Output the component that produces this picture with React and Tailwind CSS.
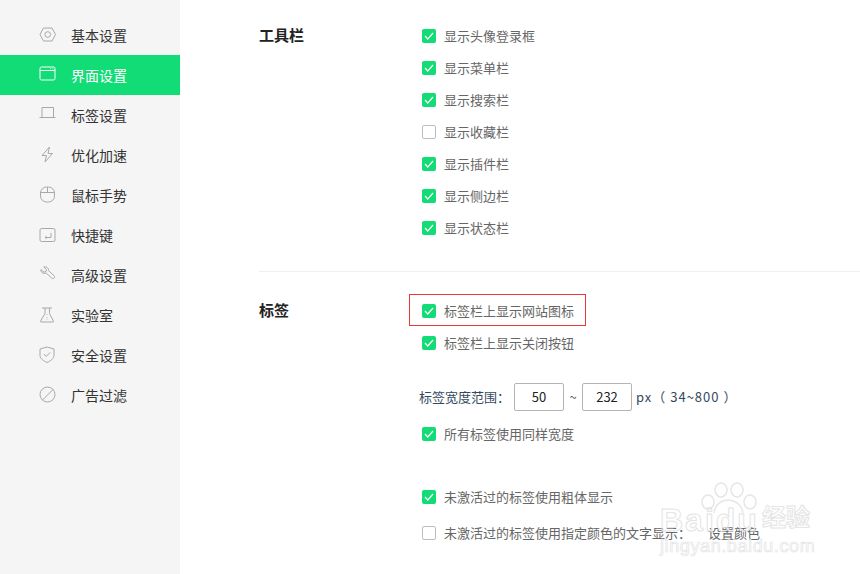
import React from 'react';

const font = { fontFamily: '"Noto Sans CJK SC", sans-serif' };

function NavIcon({ name, active }) {
  const cls = active ? 'text-white' : 'text-[#a8a8a8]';
  const paths = {
    basic: <><path d="M4.5 1h8.500l3.500 6.500-3.500 6.500H4.500L1 7.500z" transform="translate(0 1)" /><circle cx="8.750" cy="8.500" r="2.800" /></>,
    ui: <><rect x="1" y="1" width="15" height="13" rx="1.500" /><path d="M1 4.500h15M11 2.800h.8M13.500 2.800h.8" /></>,
    tab: <><path d="M3 1.500h11.500v10H3zM.5 11.500h16" /></>,
    speed: <path d="M10.500 1 3 9.500h4.500l-1.500 6.500 7.500-8.500H9z" />,
    mouse: <><rect x="1.500" y="1" width="14" height="15" rx="6" /><path d="M1.500 6.500h14M8.500 1v5.500" /></>,
    key: <><rect x="1" y="2.500" width="15" height="13" rx="1.500" /><path d="M12 7v4.500H6M6 11.500l1.500-1.200M6 11.500l1.500 1.200" /></>,
    advanced: <path d="M2 3.500 5 6.200l2-.7.500-2L4.800 1c3-.8 5 1.200 4.700 3.600l5.500 5c1.800 1.800-.6 3.900-2.300 2.400L7.300 7.200C4.500 8 1.200 6.300 2 3.500z" />,
    lab: <g transform="translate(0 1)"><path d="M3 1h10M6 1v5.500L1.500 14.200c-.2.500 0 .8.500.8h12c.5 0 .8-.3.500-.8L10.500 6.500V1" /><path d="M8 7v.8M8 10v.8M8 12.500v.5" /></g>,
    safe: <><path d="M8 1 15 3v6.500c0 3-3.500 5.500-7 7-3.500-1.500-7-4-7-7V3z" /><path d="m4.800 8 2.400 2.400 4-4" /></>,
    ad: <><circle cx="8.500" cy="8.500" r="7.500" /><path d="M3.500 14 14 3.500" /></>,
  };
  return (
    <svg className={`w-[17px] h-[17px] ${cls}`} viewBox="0 0 17 17" fill="none" stroke="currentColor" strokeWidth="1">
      {paths[name]}
    </svg>
  );
}

const navItems = [
  { id: 'basic', label: '基本设置' },
  { id: 'ui', label: '界面设置' },
  { id: 'tab', label: '标签设置' },
  { id: 'speed', label: '优化加速' },
  { id: 'mouse', label: '鼠标手势' },
  { id: 'key', label: '快捷键' },
  { id: 'advanced', label: '高级设置' },
  { id: 'lab', label: '实验室' },
  { id: 'safe', label: '安全设置' },
  { id: 'ad', label: '广告过滤' },
];

function Check({ checked, label, className = '' }) {
  return (
    <div className={`flex items-center h-8 ${className}`}>
      {checked ? (
        <span className="w-[14px] h-[14px] rounded-[2px] bg-[#12dc76] flex items-center justify-center">
          <svg className="w-[10px] h-[10px]" viewBox="0 0 10 10" fill="none" stroke="white" strokeWidth="1.200">
            <path d="m1 5 2.800 3L9 2" />
          </svg>
        </span>
      ) : (
        <span className="w-[14px] h-[14px] rounded-[2px] bg-white border border-[#bdbdbd]"></span>
      )}
      <span className="ml-2 -mt-px text-[13px] text-[#666]">{label}</span>
    </div>
  );
}

const toolbarItems = [
  { label: '显示头像登录框', checked: true },
  { label: '显示菜单栏', checked: true },
  { label: '显示搜索栏', checked: true },
  { label: '显示收藏栏', checked: false },
  { label: '显示插件栏', checked: true },
  { label: '显示侧边栏', checked: true },
  { label: '显示状态栏', checked: true },
];

export default function App() {
  return (
    <div className="relative w-[860px] h-[574px] flex bg-white overflow-hidden" style={font}>
      {/* Sidebar */}
      <div className="w-[180px] bg-[#f5f5f5] pt-[15px] shrink-0">
        {navItems.map((item) => {
          const active = item.id === 'ui';
          return (
            <div key={item.id} className={`h-10 flex items-center pl-[39px] ${active ? 'bg-[#12dc76]' : ''}`}>
              <span className="w-8 -mt-0.5 shrink-0"><NavIcon name={item.id} active={active} /></span>
              <span className={`text-sm ${active ? 'text-white' : 'text-[#333]'}`}>{item.label}</span>
            </div>
          );
        })}
      </div>

      {/* Main */}
      <div className="flex-1 pl-[79px] pt-5">
        <div className="flex pb-[27px] border-b border-[#f0f0f0]">
          <div className="w-[163px] h-8 -mt-px flex items-center text-[15px] font-bold text-[#222]">工具栏</div>
          <div>
            {toolbarItems.map((item) => (
              <Check key={item.label} checked={item.checked} label={item.label} />
            ))}
          </div>
        </div>

        <div className="flex pt-[23px]">
          <div className="w-[163px] h-8 -mt-px flex items-center text-[15px] font-bold text-[#222]">标签</div>
          <div>
            <div className="relative">
              <Check checked label="标签栏上显示网站图标" />
              <div className="absolute left-[-13px] top-[-1px] w-[177px] h-8 border border-[#e83a3a]"></div>
            </div>
            <Check checked label="标签栏上显示关闭按钮" />
            <div className="flex items-center h-7 mt-6 -ml-[3px] text-[13px] text-[#34495e]">
              <span className="w-[95px]">标签宽度范围：</span>
              <span className="w-[50px] h-7 border border-[#b4b4b4] rounded-[2px] flex items-center justify-center text-[#222]">50</span>
              <span className="w-[18px] text-center text-[#666]">~</span>
              <span className="w-[50px] h-7 border border-[#b4b4b4] rounded-[2px] flex items-center justify-center text-[#222]">232</span>
              <span className="ml-[4px] tracking-[1px]">px（ 34~800 ）</span>
            </div>
            <Check checked label="所有标签使用同样宽度" className="mt-[7px]" />
            <Check checked label="未激活过的标签使用粗体显示" className="mt-[31px]" />
            <div className="flex items-center mt-1">
              <Check checked={false} label="未激活过的标签使用指定颜色的文字显示：" />
              <span className="ml-[17px] -mt-px text-[13px] text-[#666]">设置颜色</span>
            </div>
          </div>
        </div>
      </div>

      {/* Baidu watermark */}
      <div className="absolute left-[660px] top-[482px] w-[155px] h-[75px] pointer-events-none text-[#e6e6e6]">
        <svg className="absolute left-[40px] top-0 w-[57px] h-[32px]" viewBox="0 0 57 32" fill="none" stroke="currentColor" strokeWidth="1.500">
          <ellipse cx="8" cy="20" rx="6" ry="7" />
          <ellipse cx="21" cy="8" rx="6" ry="7" />
          <ellipse cx="37" cy="8" rx="6" ry="7" />
          <ellipse cx="50" cy="20" rx="6" ry="7" />
          <path d="M14 31c1-9 8-13 14-13s14 4 15 13" />
        </svg>
        <span className="absolute left-0 top-[22px] text-[32px] leading-none font-bold tracking-[2px] text-transparent [-webkit-text-stroke:1px_#e4e4e4]" style={{ fontFamily: '"Liberation Sans", sans-serif' }}>Baidu</span>
        <span className="absolute left-[102px] top-[22px] text-[24px] leading-none font-bold text-transparent [-webkit-text-stroke:1px_#e4e4e4]">经验</span>
        <span className="absolute left-0 top-[55px] text-[18px] leading-none tracking-[0.6px] text-transparent [-webkit-text-stroke:0.7px_#e4e4e4]" style={{ fontFamily: '"Liberation Sans", sans-serif' }}>jingyan.baidu.com</span>
      </div>
    </div>
  );
}
